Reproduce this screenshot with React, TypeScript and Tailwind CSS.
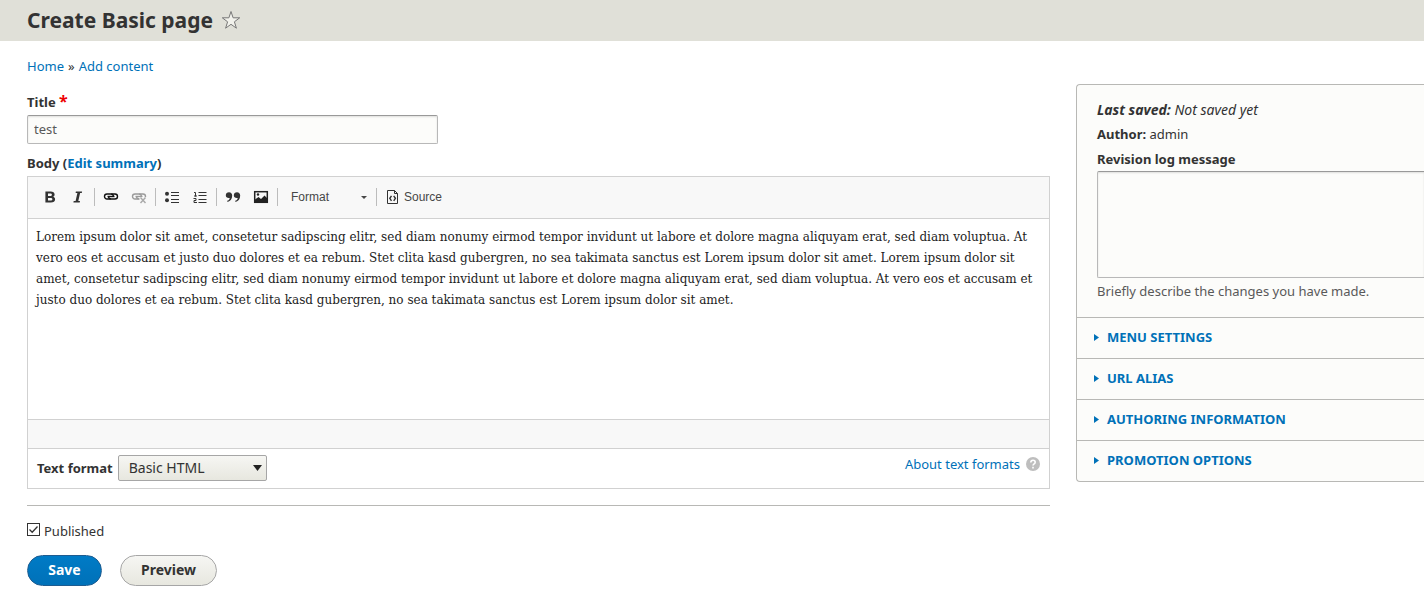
import React, { useState } from 'react';

const BODY_TEXT =
  'Lorem ipsum dolor sit amet, consetetur sadipscing elitr, sed diam nonumy eirmod tempor invidunt ut labore et dolore magna aliquyam erat, sed diam voluptua. At vero eos et accusam et justo duo dolores et ea rebum. Stet clita kasd gubergren, no sea takimata sanctus est Lorem ipsum dolor sit amet. Lorem ipsum dolor sit amet, consetetur sadipscing elitr, sed diam nonumy eirmod tempor invidunt ut labore et dolore magna aliquyam erat, sed diam voluptua. At vero eos et accusam et justo duo dolores et ea rebum. Stet clita kasd gubergren, no sea takimata sanctus est Lorem ipsum dolor sit amet.';

const SECTIONS = ['Menu settings', 'URL alias', 'Authoring information', 'Promotion options'];

const ToolButton: React.FC<{ label: string; disabled?: boolean; children: React.ReactNode }> = ({ label, disabled, children }) => (
  <button type="button" aria-label={label} title={label} disabled={disabled} className="flex h-7 w-7 items-center justify-center disabled:opacity-40">
    <svg width="16" height="16" viewBox="0 0 16 16" fill="none" className="text-[#333]">
      {children}
    </svg>
  </button>
);

const Separator = () => <span className="mx-0.5 h-[18px] w-px bg-[#bcbcbc]" />;

const LinkShape = () => (
  <g stroke="#111" strokeWidth="1.4">
    <path d="M7.8 10H4a2.500 2.500 0 0 1 0-5h4.200a2.500 2.500 0 0 1 2.300 2" />
    <path d="M8.200 5H12a2.500 2.500 0 0 1 0 5H7.800a2.500 2.500 0 0 1-2.300-2" />
    <path d="M4.500 7.500h7" />
  </g>
);

const Toolbar = () => (
  <div className="flex h-[42px] items-center border-b border-[#d1d1d1] bg-[#f8f8f8] pb-0.5 pl-2">
    <ToolButton label="Bold">
      <path fill="currentColor" fillRule="evenodd" d="M3.4 2.500h5.200c2.500 0 4 1.100 4 3 0 1.100-.6 1.900-1.600 2.300 1.400.3 2.100 1.200 2.100 2.500 0 2.100-1.600 3.200-4.200 3.200H3.400zM6 4.400v2.700h2c1.200 0 1.900-.5 1.900-1.400S9.300 4.400 8.200 4.400zM6 9v2.600h2.400c1.300 0 2-.4 2-1.300S9.700 9 8.300 9z" />
    </ToolButton>
    <ToolButton label="Italic">
      <path fill="currentColor" d="M5.900 2.500h6.200l-.3 1.400h-1.700L8.300 12H10l-.3 1.500H3.400l.3-1.500h1.900l1.800-8.100H5.600z" />
    </ToolButton>
    <Separator />
    <ToolButton label="Link">
      <LinkShape />
    </ToolButton>
    <ToolButton label="Unlink" disabled>
      <LinkShape />
      <path d="M8.500 8h8v7h-8z" fill="#f8f8f8" />
      <path d="M9.500 8.500l5 5.500m0-5.500l-5 5.500" stroke="currentColor" strokeWidth="1.400" />
    </ToolButton>
    <Separator />
    <ToolButton label="Bulleted list">
      <circle cx="3" cy="4.800" r="2" fill="currentColor" />
      <circle cx="3" cy="11.200" r="2" fill="currentColor" />
      <path d="M7 3.500h8M7 6.500h8M7 10.500h8M7 13.500h8" stroke="currentColor" />
    </ToolButton>
    <ToolButton label="Numbered list">
      <path d="M2 3.500h1.500v4M2 7h3M1.500 9.500h2.500v2h-2v2h3M6.500 3.500h8M6.500 6.500h8M6.500 10.500h8M6.500 13.500h8" stroke="currentColor" />
    </ToolButton>
    <Separator />
    <ToolButton label="Block quote">
      <path fill="currentColor" d="M4 3.200c2 0 3.200 1.300 3.200 3.400 0 3.400-1.600 5.600-4.600 6.400l-.5-1.200c1.700-.6 2.500-1.500 2.600-2.900-2.300.4-3.900-.7-3.900-2.700 0-1.800 1.300-3 3.200-3zM12 3.200c2 0 3.200 1.300 3.200 3.400 0 3.400-1.600 5.600-4.600 6.400l-.5-1.200c1.700-.6 2.500-1.500 2.600-2.900-2.300.4-3.900-.7-3.900-2.700 0-1.800 1.300-3 3.200-3z" />
    </ToolButton>
    <ToolButton label="Image">
      <rect x="1.700" y="2.700" width="12.600" height="10.600" stroke="#222" strokeWidth="1.500" />
      <path d="M2 13v-2.500l3.500-2.500 2.500 2 3.500-3.500L14 9v4z" fill="#222" />
      <circle cx="5" cy="5.500" r="1.200" fill="#222" />
    </ToolButton>
    <Separator />
    <div className="relative ml-1">
      <select aria-label="Paragraph format" className="block h-7 w-[90px] appearance-none bg-transparent pl-[7px] font-['Liberation_Sans',sans-serif] text-xs text-[#474747]">
        <option>Format</option>
      </select>
      <svg width="6" height="3" viewBox="0 0 6 3" className="pointer-events-none absolute top-[13px] right-[7px]">
        <path d="M0 0h6L3 3z" fill="#474747" />
      </svg>
    </div>
    <Separator />
    <button type="button" className="ml-[7px] flex h-7 items-center gap-1 font-['Liberation_Sans',sans-serif] text-xs text-[#474747]">
      <svg width="14" height="16" viewBox="0 0 14 16" fill="none" stroke="#333">
        <path d="M1.500 1.500h7l3 3v10h-10zM8.500 1.500v3h3" />
        <path d="M5.500 6.800L3.800 9.300l1.700 2.500M7.700 6.800l1.700 2.500-1.700 2.500" strokeWidth="1.400" />
      </svg>
      Source
    </button>
  </div>
);

const Sidebar = () => (
  <aside className="mt-[3px] w-[348px] shrink-0 rounded-l-sm border border-r-0 border-[#b8b8b5] bg-[#fcfcfa]">
    <div className="h-[232px] pt-[13px] pl-5">
      <p className="h-6 text-sm leading-6 italic"><b>Last saved:</b> Not saved yet</p>
      <p className="h-6 leading-6"><b>Author:</b> admin</p>
      <label htmlFor="log" className="block h-[25px] leading-[26px] font-bold">Revision log message</label>
      <textarea id="log" className="block h-[107px] w-full resize-none rounded-l-xs border border-r-0 border-[#b8b8b8] border-t-[#999] bg-[#fcfcfa] p-2 shadow-[inset_0_1px_2px_rgba(0,0,0,0.12)]" />
      <p className="mt-1 text-[#595959]">Briefly describe the changes you have made.</p>
    </div>
    {SECTIONS.map(name => (
      <button key={name} type="button" className="flex h-[41px] w-full items-center gap-2 border-t border-[#b8b8b5] pb-0.5 pl-[17px] text-left font-bold text-[#0071b8] uppercase">
        <svg width="5" height="7" viewBox="0 0 5 7"><path d="M0 0l5 3.500L0 7z" fill="#0071b8" /></svg>
        {name}
      </button>
    ))}
  </aside>
);

const App: React.FC = () => {
  const [title, setTitle] = useState('test');
  const [published, setPublished] = useState(true);

  return (
    <div className="overflow-hidden bg-white font-['Noto_Sans',sans-serif] text-[13px] leading-[18px] text-[#333]">
      <header className="flex h-[41px] items-center gap-2 bg-[#e0e0d8] pb-0.5 pl-[27px]">
        <h1 className="text-[21px] leading-7 font-bold">Create Basic page</h1>
        <button type="button" aria-label="Add to shortcuts">
          <svg width="20" height="20" viewBox="0 0 20 20" fill="#f2f2ec" stroke="#777" className="block">
            <path d="M10 1.500l2.100 6.300h6.600l-5.300 4 2 6.400-5.400-3.900-5.400 3.900 2-6.400-5.300-4h6.600z" />
          </svg>
        </button>
      </header>

      <nav aria-label="Breadcrumb" className="flex gap-1 pt-4 pl-[27px]">
        <a href="#" className="text-[#0071b8]">Home</a>
        <span>»</span>
        <a href="#" className="text-[#0071b8]">Add content</a>
      </nav>

      <form className="flex items-start gap-[26px] pt-[6px] pl-[27px]" onSubmit={e => e.preventDefault()}>
        <div className="min-w-0 flex-1 pt-3">
          <label htmlFor="title" className="block font-bold">Title <span className="text-base leading-none text-[#e00]">*</span></label>
          <input id="title" value={title} onChange={e => setTitle(e.target.value)} className="mt-1 block h-[29px] w-[411px] rounded-xs border border-[#b8b8b8] border-t-[#999] bg-[#fcfcfa] px-[6px] pb-0.5 text-[#595959] shadow-[inset_0_1px_2px_rgba(0,0,0,0.12)]" />
          <div className="mt-[10px] mb-1 font-bold">Body (<a href="#" className="text-[#0071b8]">Edit summary</a>)</div>

          <div className="border border-[#d1d1d1]">
            <Toolbar />
            <div contentEditable suppressContentEditableWarning role="textbox" aria-label="Body" className="h-[200px] p-2 font-['DejaVu_Serif',serif] text-xs leading-[21px] text-[#222]">
              {BODY_TEXT}
            </div>
            <div className="h-[30px] border-y border-[#d1d1d1] bg-[#f8f8f8]" />
            <div className="flex h-[39px] items-center justify-between px-[9px] pb-0.5">
              <div className="flex items-center gap-[5px]">
                <label htmlFor="format" className="font-bold">Text format</label>
                <div className="relative">
                  <select id="format" className="block h-[26px] w-[149px] appearance-none rounded-xs border border-[#a6a6a6] bg-linear-to-b from-[#f6f6f3] to-[#e7e7df] pl-[10px] text-sm text-[#333]">
                    <option>Basic HTML</option>
                  </select>
                  <svg width="9" height="6" viewBox="0 0 9 6" className="pointer-events-none absolute top-[10px] right-[5px]">
                    <path d="M0 0h9L4.500 6z" fill="#222" />
                  </svg>
                </div>
              </div>
              <a href="#" className="mb-2 flex items-center gap-[6px] text-[#0071b8]">
                About text formats
                <svg width="14" height="14" viewBox="0 0 14 14" fill="none">
                  <circle cx="7" cy="7" r="7" fill="#bebebe" />
                  <path d="M4.800 5.500C4.800 4 5.700 3.200 7 3.200s2.200.8 2.200 2c0 1.600-2.200 1.600-2.200 3.400M7 9.800v1.600" stroke="#fff" strokeWidth="1.600" />
                </svg>
              </a>
            </div>
          </div>

          <hr className="mt-4 border-[#b8b8b5]" />
          <div className="mt-4">
            <input id="published" type="checkbox" checked={published} onChange={e => setPublished(e.target.checked)} className="sr-only" />
            <label htmlFor="published" className="flex items-start gap-1">
              <svg width="13" height="13" viewBox="0 0 13 13" fill="none" stroke="#333" className="mt-px">
                <rect x=".5" y=".5" width="12" height="12" fill="#fff" />
                {published && <path d="M2.500 6.500l2.700 2.700 5.300-5.700" strokeWidth="1.300" />}
              </svg>
              Published
            </label>
          </div>
          <div className="mt-[15px] flex gap-[18px] pb-3 text-sm font-bold">
            <button type="submit" className="h-[31px] w-[75px] rounded-full border border-[#1e5c90] bg-linear-to-b from-[#007bc6] to-[#0071b8] pb-0.5 text-white">Save</button>
            <button type="button" className="h-[31px] w-[97px] rounded-full border border-[#a6a6a6] bg-linear-to-b from-[#f6f6f3] to-[#e7e7df] pb-0.5">Preview</button>
          </div>
        </div>
        <Sidebar />
      </form>
    </div>
  );
};

export default App;
